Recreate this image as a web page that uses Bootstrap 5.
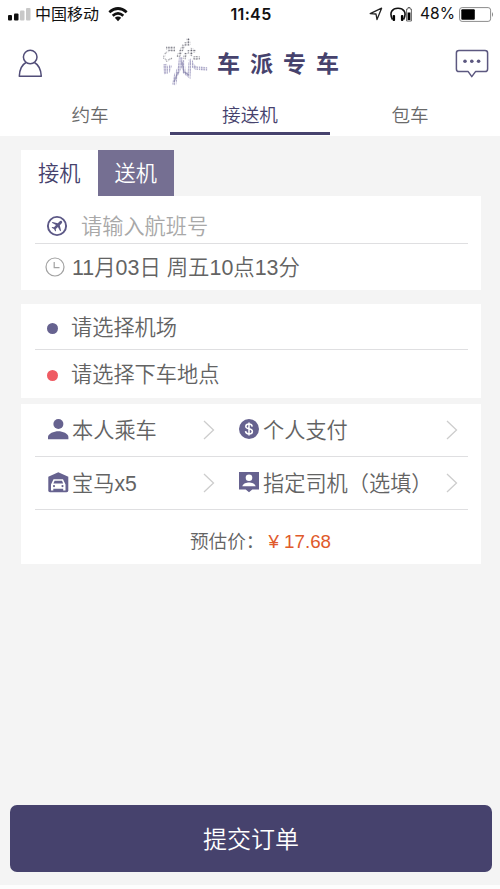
<!DOCTYPE html>
<html lang="zh-CN">
<head>
<meta charset="utf-8">
<meta name="viewport" content="width=device-width, initial-scale=1">
<title>车派专车</title>
<link href="https://cdn.jsdelivr.net/npm/bootstrap@5.3.0/dist/css/bootstrap.min.css" rel="stylesheet">
<style>
  :root { --ink: #46426d; --icon: #66628f; --rule: #dfdfe1; }
  body { font-family: "Liberation Sans", "Noto Sans CJK SC", sans-serif; font-weight: 350; color: #636363; background: #f4f4f4; font-size: 21.2px; line-height: 30px; overflow: hidden; }
  svg { display: block; flex: none; }
  .screen { height: 889px; border-bottom: 4px solid #fdfdfd; }
  .status { height: 28px; padding: 0 6px 0 8px; color: #111; font: 400 16px/28px Inter, "Noto Sans CJK SC", sans-serif; display: grid; grid-template-columns: 1fr auto 1fr; }
  .clock { font-weight: 600; font-size: 16px; letter-spacing: .35px; }
  .brand { height: 70px; padding: 0 11px 0 18px; }
  .brand-name { font-family: "Noto Sans CJK SC", sans-serif; font-weight: 700; font-size: 23px; letter-spacing: 10px; color: var(--ink); margin: -2px 0 0 9px; }
  .top-tabs { height: 38px; padding: 0 10px; }
  .top-tabs .nav-link { color: #6a6a6a; font-size: 18.6px; line-height: 33px; padding: 1px 0 0; border-radius: 0; height: 37px; border-bottom: 3px solid transparent; }
  .top-tabs .nav-link.active { color: var(--ink); border-color: var(--ink); }
  .main { padding: 14px 19px 0 21px; }
  .mode-tabs .nav-link { width: 76.5px; height: 46px; padding: 1px 0 0; line-height: 46px; border-radius: 0; background: #fff; color: var(--ink); text-align: center; }
  .mode-tabs .nav-link.alt { background: #756f92; color: #fff; }
  .panel { background: #fff; padding: 0 13px 0 14px; }
  .panel span { padding-top: 2px; }
  .line { border-bottom: 1px solid var(--rule); }
  .hint { color: #a8a8a8; }
  .dot { width: 11px; height: 11px; border-radius: 50%; margin: 3px 13px 0 12px; background: var(--icon); flex: none; }
  .dot.red { background: #ef5b63; }
  .cell { height: 100%; padding-left: 12px; }
  .cell .chev { margin-left: auto; }
  .who { width: 191px; padding-right: 11px; }
  .fare { height: 53px; font-size: 18.6px; padding: 9px 0 0 155px; }
  .price { color: #e05a2b; margin-left: 4px; font-size: 18.8px; }
  .submit { height: 67px; width: 482px; margin: 0 8px 13px 10px; border-radius: 7px; background: var(--ink); color: #fff; font-size: 24px; font-weight: 350; border: 0; padding: 2px 0 0; }
</style>
<script src="https://cdn.jsdelivr.net/npm/bootstrap@5.3.0/dist/js/bootstrap.bundle.min.js"></script>
</head>
<body>
<div class="screen d-flex flex-column">
  <header class="bg-white">
    <div class="status">
      <div class="d-flex align-items-center">
        <svg width="23" height="14" viewBox="0 0 23 14"><rect y="8" width="4" height="5.5" rx="1" fill="#111"/><rect x="6" y="6.5" width="4.5" height="7" rx="1" fill="#111"/><rect x="12" y="3.5" width="4.5" height="10" rx="1" fill="#c8c8c8"/><rect x="18" y="1" width="4.5" height="12.5" rx="1" fill="#c8c8c8"/></svg>
        <span style="margin-left:4px">中国移动</span>
        <svg width="20" height="15" viewBox="0 0 20 15" style="margin-left:9px" fill="none" stroke="#111" stroke-width="2.7"><path d="M1.3 5.2Q10-2.2 18.7 5.2M4.7 8.7Q10 4.2 15.3 8.7"/><path d="M6.8 10.8Q10 8.2 13.2 10.8L10 14.3Z" fill="#111" stroke="none"/></svg>
      </div>
      <div class="clock">11:45</div>
      <div class="d-flex align-items-center justify-content-end">
        <svg width="14" height="14" viewBox="0 0 14 14" fill="none" stroke="#222" stroke-width="1.3" stroke-linejoin="round"><path d="M1.2 6.6L12.6 1.2L8 12.6L7 7Z"/></svg>
        <svg width="16" height="15" viewBox="0 0 16 15" style="margin-left:7px"><path d="M2.5 12.5C-1.5 5 3 1.2 8 1.2S17.5 5 13.5 12.5" fill="none" stroke="#111" stroke-width="1.6"/><rect x="2.6" y="8" width="2.5" height="6" rx="1"/><rect x="10.9" y="8" width="2.5" height="6" rx="1"/></svg>
        <svg width="6" height="15" viewBox="0 0 6 15"><path d="M2 .5H4V2H5.4V14H.6V2H2Z" fill="#fff" stroke="#555" stroke-width=".9"/><path d="M1.6 5.5H4.4V13H1.6Z"/></svg>
        <span style="margin-left:8px;font-size:15.6px">48%</span>
        <svg width="35" height="15" viewBox="0 0 35 15" style="margin-left:4px"><rect x=".6" y=".6" width="31" height="13.8" rx="2.5" fill="none" stroke="#8c8c8c"/><rect x="2.3" y="2.3" width="13.5" height="10.4" rx="1"/><path d="M33.1 5Q35 7.5 33.1 10Z" fill="#777"/></svg>
      </div>
    </div>

    <div class="brand d-flex align-items-center">
      <svg width="25" height="29" viewBox="0 0 25 29" fill="none" stroke="#514d78" stroke-width="1.5"><circle cx="12.2" cy="8" r="6.8"/><path d="M8 13.5C3.5 16 1.5 22 1.3 27.2H23.3C23 22 21 16 16.4 13.5" stroke-linejoin="round"/></svg>
      <svg width="46" height="50" viewBox="0 0 46 50" style="margin-left:119px">
        <defs>
          <pattern id="fineDots" width="2.8" height="2.8" patternUnits="userSpaceOnUse"><circle cx="1.3" cy="1.3" r=".85" fill="#4b4b58"/></pattern>
          <pattern id="fadeDots" width="2.3" height="2.8" patternUnits="userSpaceOnUse"><rect width="1.4" height="2.4" fill="#a5a1c4"/></pattern>
        </defs>
        <g fill="none" stroke="url(#fineDots)">
          <path d="M4 10L11 10L11 14" stroke-width="3.5"/>
          <path d="M26 0L27 7M22 6L28 6M22 7L19 13L16 19" stroke-width="3.5"/>
          <path d="M30 10L29 18M25 14L34 13M24 15L22 21M34 18V22M31 20H38" stroke-width="3"/>
          <path d="M9 12L3 15L2 20L5 23L10 20" stroke-width="1.6"/>
        </g>
        <g fill="none" stroke="url(#fadeDots)">
          <path d="M3 26L4 36M8 27L6 34" stroke-width="4"/>
          <path d="M19 19L18 29L14 37L12 47" stroke-width="4"/>
          <path d="M21 22L22 34L27 38L28 24" stroke-width="3.2"/>
          <path d="M28 21L31 28L34 30L46 31" stroke-width="3.5"/>
        </g>
        <path d="M16 34L12 44M20 24L22 34L27 37" fill="none" stroke="#77739f" stroke-width="1.4" opacity=".6"/>
      </svg>
      <span class="brand-name">车派专车</span>
      <svg class="ms-auto" width="34" height="29" viewBox="0 0 34 29"><path d="M4 1.5H30Q32.6 1.5 32.6 4V20Q32.6 22.6 30 22.6H20.5L16.8 27.6L13.2 22.6H4Q1.4 22.6 1.4 20V4Q1.4 1.5 4 1.5Z" fill="none" stroke="#5c5880" stroke-width="1.5" stroke-linejoin="round"/><g fill="#5c5880"><circle cx="10" cy="12.3" r="1.8"/><circle cx="16.8" cy="12.3" r="1.8"/><circle cx="23.6" cy="12.3" r="1.8"/></g></svg>
    </div>

    <ul class="nav nav-fill top-tabs flex-nowrap">
      <li class="nav-item w-100"><a class="nav-link" href="#">约车</a></li>
      <li class="nav-item w-100"><a class="nav-link active" href="#">接送机</a></li>
      <li class="nav-item w-100"><a class="nav-link" href="#">包车</a></li>
    </ul>
  </header>

  <main class="main">
    <ul class="nav mode-tabs">
      <li><a class="nav-link" href="#">接机</a></li>
      <li><a class="nav-link alt" href="#">送机</a></li>
    </ul>
    <section class="panel" style="height:94px">
      <div class="line d-flex align-items-center" style="height:48px;padding:13px 0 0 11px">
        <svg width="22" height="22" viewBox="0 0 22 22"><circle cx="11" cy="11" r="9.1" fill="none" stroke="#5c5886" stroke-width="1.9"/><path d="M15.8 6.2C15.1 5.5 14.1 5.9 13.5 6.5L11.8 8.2L6.6 7L5.8 7.8L10 10.1L8 12.2L6.3 12L5.6 12.7L8 14L9.3 16.4L10 15.7L9.8 14L11.9 12L14.2 16.2L15 15.4L13.8 10.2L15.5 8.5C16.1 7.9 16.5 6.9 15.8 6.2Z" fill="#5c5886"/></svg>
        <span class="hint" style="margin-left:13px">请输入航班号</span>
      </div>
      <div class="d-flex align-items-center" style="height:46px;padding-left:10px">
        <svg width="20" height="20" viewBox="0 0 20 20" fill="none" stroke="#a2a2a2" stroke-width="1.2"><circle cx="10" cy="10" r="9"/><path d="M9.2 5V10.7H14.5"/></svg>
        <span style="margin-left:7px;font-size:21.4px">11月03日 周五10点13分</span>
      </div>
    </section>

    <section class="panel" style="height:94px;margin-top:14px">
      <div class="line d-flex align-items-center" style="height:46px"><i class="dot"></i><span>请选择机场</span></div>
      <div class="d-flex align-items-center" style="height:47px"><i class="dot red"></i><span>请选择下车地点</span></div>
    </section>

    <section class="panel" style="height:160px;margin-top:6px">
      <div class="line row g-0 align-items-center" style="height:53px">
        <div class="cell who d-flex align-items-center">
          <svg width="22" height="22" viewBox="0 0 22 22" fill="#66628f"><circle cx="11.4" cy="5" r="5"/><path d="M1 20.3V18C1 14.4 7 12.2 11.3 12.2S21.4 14.4 21.4 18V20.3Z"/></svg>
          <span style="margin-left:3px">本人乘车</span>
          <svg class="chev" width="12" height="20" viewBox="0 0 12 20" fill="none" stroke="#cdcdcd" stroke-width="1.3"><path d="M1 1L10.5 10L1 19"/></svg>
        </div>
        <div class="cell d-flex align-items-center col" style="padding-right:10px">
          <svg width="22" height="22" viewBox="0 0 22 22"><circle cx="11" cy="10" r="10" fill="#66628f"/><path d="M14.2 7.6C14 5.9 12.8 5.1 11 5.1C9.1 5.1 7.8 5.9 7.8 7.4C7.8 10.5 14.4 9 14.4 12.4C14.4 14 12.9 14.9 11 14.9C9 14.9 7.7 14 7.5 12.1M11 3.4V16.6" fill="none" stroke="#fff" stroke-width="1.5"/></svg>
          <span style="margin-left:3px">个人支付</span>
          <svg class="chev" width="12" height="20" viewBox="0 0 12 20" fill="none" stroke="#cdcdcd" stroke-width="1.3"><path d="M1 1L10.5 10L1 19"/></svg>
        </div>
      </div>
      <div class="line row g-0 align-items-center" style="height:53px">
        <div class="cell who d-flex align-items-center">
          <svg width="22" height="22" viewBox="0 0 22 22"><path d="M1.3 4.7L11.3.3L21.3 4.7V18.6Q21.3 20.3 19.6 20.3H3Q1.3 20.3 1.3 18.6Z" fill="#66628f"/><path d="M6.5 7.2H16L18.5 12.4V18.6H16.2V16.8H6.3V18.6H4V12.4ZM7.6 8.8L6.4 11.6H16.2L15 8.8Z" fill="#fff" fill-rule="evenodd"/><circle cx="7" cy="14.1" r="1.1" fill="#66628f"/><circle cx="15.5" cy="14.1" r="1.1" fill="#66628f"/></svg>
          <span style="margin-left:3px">宝马x5</span>
          <svg class="chev" width="12" height="20" viewBox="0 0 12 20" fill="none" stroke="#cdcdcd" stroke-width="1.3"><path d="M1 1L10.5 10L1 19"/></svg>
        </div>
        <div class="cell d-flex align-items-center col" style="padding-right:10px">
          <svg width="22" height="22" viewBox="0 0 22 22"><path d="M1 0H21V17.5H14.3L11 20.3L7.7 17.5H1Z" fill="#66628f"/><circle cx="11" cy="5.7" r="3.3" fill="#fff"/><path d="M4.3 14.2C5.2 11.4 8.5 10.5 11 10.5S16.8 11.4 17.7 14.2Z" fill="#fff"/></svg>
          <span class="text-nowrap" style="margin-left:3px">指定司机（选填）</span>
          <svg class="chev" width="12" height="20" viewBox="0 0 12 20" fill="none" stroke="#cdcdcd" stroke-width="1.3"><path d="M1 1L10.5 10L1 19"/></svg>
        </div>
      </div>
      <div class="fare d-flex align-items-center"><span>预估价：</span><span class="price">¥ 17.68</span></div>
    </section>
  </main>

  <button type="button" class="btn submit mt-auto">提交订单</button>
</div>
</body>
</html>
